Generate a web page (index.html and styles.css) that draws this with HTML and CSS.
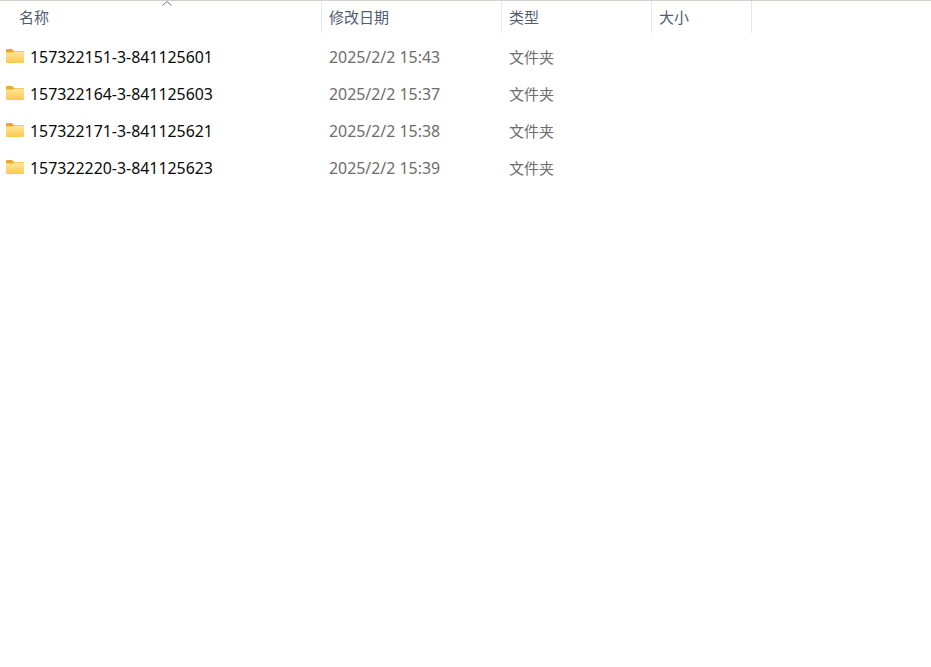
FILE: index.html
```
<!DOCTYPE html>
<html lang="zh-CN">
<head>
<meta charset="utf-8">
<title>文件列表</title>
<link rel="stylesheet" href="styles.css">
</head>
<body>
<div class="explorer">
  <div class="header">
    <div class="head-cell col-name">名称<svg class="sort" width="10" height="5" viewBox="0 0 10 5"><path d="M0.5 4.5 L5 0.5 L9.5 4.5" fill="none" stroke="#6f7780" stroke-width="1"/></svg></div>
    <div class="head-cell col-date">修改日期</div>
    <div class="head-cell col-type">类型</div>
    <div class="head-cell col-size">大小</div>
  </div>
  <div class="rows">
    <div class="row">
      <div class="cell col-name name"><svg class="folder" width="18" height="14" viewBox="0 0 18 14"><use href="#folder"/></svg>157322151-3-841125601</div>
      <div class="cell col-date">2025/2/2 15:43</div>
      <div class="cell col-type">文件夹</div>
    </div>
    <div class="row">
      <div class="cell col-name name"><svg class="folder" width="18" height="14" viewBox="0 0 18 14"><use href="#folder"/></svg>157322164-3-841125603</div>
      <div class="cell col-date">2025/2/2 15:37</div>
      <div class="cell col-type">文件夹</div>
    </div>
    <div class="row">
      <div class="cell col-name name"><svg class="folder" width="18" height="14" viewBox="0 0 18 14"><use href="#folder"/></svg>157322171-3-841125621</div>
      <div class="cell col-date">2025/2/2 15:38</div>
      <div class="cell col-type">文件夹</div>
    </div>
    <div class="row">
      <div class="cell col-name name"><svg class="folder" width="18" height="14" viewBox="0 0 18 14"><use href="#folder"/></svg>157322220-3-841125623</div>
      <div class="cell col-date">2025/2/2 15:39</div>
      <div class="cell col-type">文件夹</div>
    </div>
  </div>
</div>
<svg class="defs" width="0" height="0">
  <defs>
    <linearGradient id="fg" x1="0" y1="0" x2="0" y2="1">
      <stop offset="0" stop-color="#ffe89a"/>
      <stop offset="1" stop-color="#fcc94f"/>
    </linearGradient>
    <symbol id="folder" viewBox="0 0 18 14">
      <path d="M0 1 Q0 0 1 0 H6 L8 2 H17 Q18 2 18 3 V6 H0 Z" fill="#eaa92c"/>
      <path d="M0 3.500 H7 L8.500 2.500 H17.500 Q18 2.500 18 3.500 V13 Q18 14 17 14 H1 Q0 14 0 13 Z" fill="url(#fg)"/>
    </symbol>
  </defs>
</svg>
</body>
</html>
```
FILE: styles.css
```
* { box-sizing: border-box; }
html, body { margin: 0; padding: 0; background: #fff; }
body { width: 931px; height: 667px; overflow: hidden; font-family: "Noto Sans", "Noto Sans CJK SC", sans-serif; }
.explorer { border-top: 1px solid #d2d2cc; }
.header { display: flex; height: 32px; }
.head-cell {
  position: relative;
  display: flex;
  align-items: center;
  height: 32px;
  padding-left: 7px;
  border-right: 1px solid #e6e8eb;
  color: #4f5d6e;
  font-size: 15px;
  font-family: "Noto Sans CJK SC", sans-serif;
  padding-bottom: 2px;
}
.col-name { width: 322px; }
.col-date { width: 180px; }
.col-type { width: 150px; }
.col-size { width: 100px; }
.header .col-name { padding-left: 19px; }
.sort { position: absolute; left: 162px; top: 0; }
.rows { display: flex; flex-direction: column; gap: 13px; padding-top: 12px; }
.row { display: flex; height: 24px; align-items: center; }
.cell { font-size: 15.9px; color: #6d6d6d; padding-left: 7px; white-space: nowrap; }
.col-type.cell { font-size: 15px; font-family: "Noto Sans CJK SC", sans-serif; padding-bottom: 2px; }
.cell.name { display: flex; align-items: center; padding-left: 6px; color: #0a0a0a; }
.folder { margin-right: 6px; position: relative; top: -1px; }
.defs { position: absolute; }
```
